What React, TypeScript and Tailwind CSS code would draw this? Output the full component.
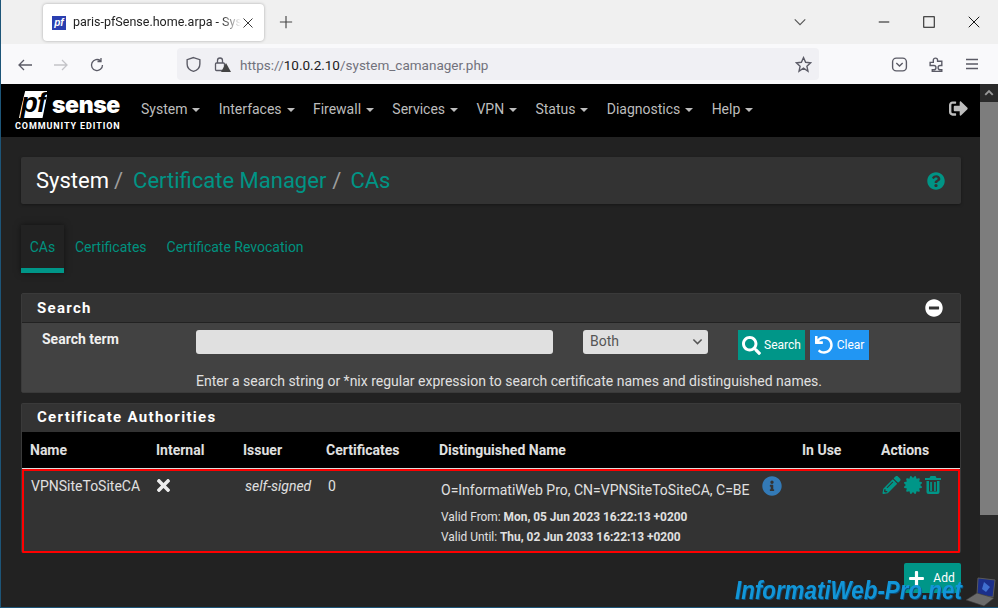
import React from "react";
import { FaSearch, FaUndo, FaPlus, FaTimes, FaInfoCircle, FaMinusCircle, FaQuestionCircle, FaCertificate, FaPencilAlt, FaSignOutAlt } from "react-icons/fa";

const nav = ["System", "Interfaces", "Firewall", "Services", "VPN", "Status", "Diagnostics", "Help"];

function Ico({ d, className = "" }: { d: React.ReactNode; className?: string }) {
  return (
    <svg viewBox="0 0 16 16" fill="none" stroke="currentColor" strokeWidth="1.3" className={className}>
      {d}
    </svg>
  );
}

function Logo() {
  return (
    <div className="self-start flex flex-col items-start w-[108px] ml-[14px] mr-[18px] pt-[7px]">
      <div className="flex items-start h-[27px] ml-[4px]">
        <div className="h-[27px] w-[28px] bg-white flex items-center justify-center overflow-hidden [clip-path:polygon(22%_0,100%_0,100%_18%,84%_100%,0_100%,8%_60%)]">
          <span className="text-black font-bold italic text-[28px] tracking-[-1px] leading-none font-['Liberation_Sans',sans-serif] mt-[-4px]">pf</span>
        </div>
        <span className="text-white font-black text-[23px] leading-[23px] tracking-[-0.4px] font-['Inter',sans-serif] ml-[5px] mt-[3px]">sense</span>
      </div>
      <span className="text-white font-bold text-[9px] tracking-[0.9px] leading-[11px] mt-[3px] whitespace-nowrap">COMMUNITY EDITION</span>
    </div>
  );
}

function Laptop() {
  return (
    <svg viewBox="0 0 60 40" className="absolute left-[937px] top-[568px] w-[60px] h-[40px]">
      <path d="M40 10l17 2-2 17-16-2z" fill="#1b2f8a" stroke="#5a5a5a" strokeWidth="1" />
      <path d="M46 14l6 5-4 5-4-3z" fill="#3f6fd0" />
      <path d="M28 32l11-7 17 5-10 8z" fill="#6b6b6b" stroke="#3a3a3a" strokeWidth="0.6" />
    </svg>
  );
}

export default function App() {
  return (
    <div className="h-[608px] w-[998px] overflow-hidden flex flex-col font-['Roboto',sans-serif] bg-[#222] border-l border-b border-[#1d5578] relative">
      {/* browser tab strip */}
      <div className="h-[44px] shrink-0 bg-[#f0f0f0] flex items-center font-['Noto_Sans',sans-serif]">
        <div className="ml-[42px] mt-[1px] w-[221px] h-[37px] bg-white rounded-[4px] shadow-[0_0_3px_rgba(0,0,0,0.3)] flex items-center pl-[9px]">
          <span className="w-[14px] h-[14px] bg-[#2a3fb0] text-white text-[10px] font-bold italic leading-[14px] text-center font-['Liberation_Sans',sans-serif]">pf</span>
          <span className="ml-[7px] w-[168px] text-[12.5px] text-[#222] whitespace-nowrap overflow-hidden font-['Roboto',sans-serif] [mask-image:linear-gradient(to_right,black_88%,transparent)]">paris-pfSense.home.arpa - System: Cert</span>
          <Ico className="w-[12px] h-[12px] text-[#333] ml-[1px]" d={<path d="M2 2l12 12M14 2L2 14" />} />
        </div>
        <Ico className="w-[14px] h-[14px] text-[#444] ml-[15px]" d={<path d="M8 1v14M1 8h14" />} />
        <div className="flex-1" />
        <Ico className="w-[14px] h-[14px] text-[#555] mr-[71px]" d={<path d="M2 5l6 6 6-6" />} />
        <Ico className="w-[12px] h-[12px] text-[#111] mr-[33px]" d={<path d="M1 8h14" />} />
        <Ico className="w-[12px] h-[12px] text-[#111] mr-[33px]" d={<rect x="1" y="1" width="14" height="14" />} />
        <Ico className="w-[12px] h-[12px] text-[#111] mr-[18px]" d={<path d="M1 1l14 14M15 1L1 15" />} />
      </div>
      {/* browser toolbar */}
      <div className="h-[40px] shrink-0 bg-[#f9f9fb] flex items-center">
        <Ico className="w-[16px] h-[16px] text-[#5b5b66] ml-[16px] mt-[2px]" d={<path d="M15 8H2M7 3L2 8l5 5" />} />
        <Ico className="w-[16px] h-[16px] text-[#c4c4c8] ml-[20px] mt-[2px]" d={<path d="M1 8h13M9 3l5 5-5 5" />} />
        <Ico className="w-[16px] h-[16px] text-[#5b5b66] ml-[20px] mt-[2px]" d={<path d="M13.5 8A5.5 5.5 0 1 1 11.5 3.8M12 1v3.5H8.5" />} />
        <div className="ml-[72px] w-[642px] h-[32px] bg-[#f0f0f4] rounded-[4px] flex items-center pl-[8px]">
          <Ico className="w-[17px] h-[17px] text-[#5b5b66]" d={<path d="M8 1.5l6 2v4c0 3.5-2.500 6-6 7-3.500-1-6-3.500-6-7v-4z" />} />
          <div className="relative ml-[11px] w-[16px] h-[16px]">
            <Ico className="w-[16px] h-[16px] text-[#5b5b66]" d={<><rect x="2.5" y="7" width="9" height="7.5" rx="1" /><path d="M4.5 7V4.500a2.500 2.500 0 0 1 5 0V7" /></>} />
            <span className="absolute right-[-2px] bottom-0 w-0 h-0 border-l-[5px] border-r-[5px] border-b-[9px] border-transparent border-b-[#444]" />
          </div>
          <span className="ml-[11px] mt-[3px] text-[13.5px] text-[#72727c] whitespace-nowrap">https://<span className="text-[#1c1b22] font-normal">10.0.2.10</span>/system_camanager.php</span>
          <div className="flex-1" />
          <Ico className="w-[17px] h-[17px] text-[#5b5b66] mr-[7px]" d={<path d="M8 1.500l2 4.400 4.700.5-3.500 3.200 1 4.700L8 11.400l-4.200 2.900 1-4.700L1.300 6.400 6 5.900z" />} />
        </div>
        <Ico className="w-[17px] h-[17px] text-[#5b5b66] ml-[72px]" d={<><rect x="1.500" y="2" width="13" height="12" rx="3.500" /><path d="M5 6.500l3 3 3-3" /></>} />
        <Ico className="w-[17px] h-[17px] text-[#5b5b66] ml-[20px]" d={<path d="M2 6h3V4a2 2 0 0 1 4 0v1h4v4h-1.500a2 2 0 0 0 0 4H13v1.500H4V13h1.500a2 2 0 0 0 0-4H2z" />} />
        <Ico className="w-[16px] h-[16px] text-[#5b5b66] ml-[19px]" d={<path d="M2 3.500h12M2 8h12M2 12.500h12" />} />
      </div>
      {/* page */}
      <div className="flex-1 flex min-h-0">
        <div className="flex-1 min-w-0 relative">
          <div className="h-[53px] bg-black flex items-center">
            <Logo />
            <nav className="flex items-center gap-[18.3px] text-[14px] text-[#bdbdbd] -mt-[2px]">
              {nav.map((n) => (
                <span key={n} className="flex items-center gap-[5px]">
                  {n}
                  <span className="w-0 h-0 border-l-[4px] border-r-[4px] border-t-[4px] border-transparent border-t-[#bdbdbd]" />
                </span>
              ))}
            </nav>
            <div className="flex-1" />
            <FaSignOutAlt className="text-[#bdbdbd] w-[19px] h-[19px] mr-[12px] mb-[4px]" />
          </div>
          <div className="pl-[20px] pr-[19px] pt-[20px]">
            <div className="h-[47px] bg-[#333] flex items-center pl-[15px] pr-[16px] rounded-[2px] shadow-[0_1px_3px_rgba(0,0,0,0.35)] text-[22px]">
              <div className="flex items-center">
                <span className="text-white">System</span>
                <span className="text-[#9e9e9e] ml-[5px]">/</span>
                <span className="text-[#009485] ml-[10px]">Certificate Manager</span>
                <span className="text-[#9e9e9e] ml-[6px]">/</span>
                <span className="text-[#009485] ml-[9px]">CAs</span>
              </div>
              <div className="flex-1" />
              <FaQuestionCircle className="text-[#009485] w-[18px] h-[18px]" />
            </div>
            <div className="flex mt-[21px] h-[48px] text-[14px] text-[#00917f]">
              <span className="w-[43px] text-center leading-[44px] border-b-[5px] border-[#009688] shadow-[0_0_6px_rgba(0,0,0,0.5)]">CAs</span>
              <span className="ml-[11px] leading-[44px]">Certificates</span>
              <span className="ml-[20px] leading-[44px]">Certificate Revocation</span>
            </div>
            <section className="mt-[20px] border border-[#3a3a3a] rounded-[2px]">
              <h2 className="h-[29px] bg-[#333] border-b border-[#222] flex items-center justify-between pl-[15px] pr-[17px] text-white font-bold text-[15px] tracking-[1.3px]">
                Search
                <FaMinusCircle className="w-[18px] h-[18px] text-white" />
              </h2>
              <div className="h-[69px] bg-[#424242] pl-[20px] pt-[7px] flex flex-col">
                <div className="flex items-start">
                  <label className="w-[154px] text-[14px] font-bold text-[#f0f0f0] leading-[18px]">Search term</label>
                  <div className="w-[357px] h-[24px] bg-[#e0e0e0] rounded-[3px]" />
                  <div className="ml-[30px] w-[125px] h-[24px] pb-[2px] bg-[#e0e0e0] rounded-[3px] flex items-center justify-between pl-[7px] pr-[5px] text-[14px] text-[#555]">
                    Both
                    <Ico className="w-[11px] h-[11px] text-[#555]" d={<path d="M2 5l6 6 6-6" strokeWidth="2.2" />} />
                  </div>
                  <button className="ml-[30px] h-[30px] w-[67px] bg-[#009688] text-white text-[12px] flex items-center justify-center gap-[3px]">
                    <FaSearch className="w-[19px] h-[19px]" /> <span>Search</span>
                  </button>
                  <button className="ml-[5px] h-[30px] w-[59px] bg-[#2196f3] text-white text-[12px] flex items-center justify-center gap-[4px]">
                    <FaUndo className="w-[18px] h-[18px]" /> <span>Clear</span>
                  </button>
                </div>
                <p className="ml-[154px] mt-[12px] text-[14px] leading-[18px] text-[#e0e0e0] whitespace-nowrap">Enter a search string or *nix regular expression to search certificate names and distinguished names.</p>
              </div>
            </section>
            <section className="mt-[10px] border border-[#3a3a3a] border-b-0 rounded-[2px]">
              <h2 className="h-[28px] pb-[1px] bg-[#333] flex items-center pl-[15px] text-white font-bold text-[15px] tracking-[1.3px]">Certificate Authorities</h2>
              <div className="h-[37px] bg-black border-b border-[#ddd] grid grid-cols-[126px_87px_83px_113px_363px_79px_1fr] items-center pl-[8px] text-[14px] font-bold text-[#e0e0e0]">
                <span>Name</span><span>Internal</span><span>Issuer</span><span>Certificates</span><span>Distinguished Name</span><span>In Use</span><span>Actions</span>
              </div>
              <div className="h-[84px] bg-[#333] border-2 border-[#f00] rounded-[1px] grid grid-cols-[126px_87px_83px_113px_363px_79px_1fr] items-start pl-[6px] pt-[5px] text-[14px] text-[#e0e0e0]">
                <span className="leading-[20px] pl-[1px]">VPNSiteToSiteCA</span>
                <span className="pt-0"><FaTimes className="w-[19px] h-[19px] text-[#eee] -ml-[2px]" /></span>
                <span className="italic leading-[20px] pl-[2px]">self-signed</span>
                <span className="leading-[20px] pl-[2px]">0</span>
                <div className="pl-[2px] relative">
                  <div className="leading-[20px] pt-[4px] whitespace-nowrap">O=InformatiWeb Pro, CN=VPNSiteToSiteCA, C=BE</div>
                  <div className="mt-[7px] text-[11.9px] leading-[20px] whitespace-nowrap">Valid From: <b>Mon, 05 Jun 2023 16:22:13 +0200</b></div>
                  <div className="text-[11.9px] leading-[20px] whitespace-nowrap">Valid Until: <b>Thu, 02 Jun 2033 16:22:13 +0200</b></div>
                  <FaInfoCircle className="absolute left-[323px] top-0 w-[20px] h-[20px] text-[#337ab7]" />
                </div>
                <span />
                <div className="flex items-center gap-[3px] text-[#009688] pl-[1px]">
                  <FaPencilAlt className="w-[19px] h-[18px]" />
                  <FaCertificate className="w-[18px] h-[18px]" />
                  <svg viewBox="0 0 16 18" className="w-[16px] h-[18px]" fill="currentColor">
                    <path d="M5.500 0h5l1 2H16v2H0V2h4.500z" />
                    <path d="M1.500 5H4v10.500h8V5h2.500v11a2 2 0 0 1-2 2h-9a2 2 0 0 1-2-2z" />
                    <rect x="5.200" y="6" width="1.700" height="9" />
                    <rect x="9.100" y="6" width="1.700" height="9" />
                  </svg>
                </div>
              </div>
            </section>
            <div className="flex justify-end mt-[10px]">
              <button className="w-[57px] h-[30px] bg-[#009688] rounded-[2px] text-white text-[12px] flex items-center justify-center gap-[8px] pr-[2px]">
                <FaPlus className="w-[17px] h-[17px]" /> <span>Add</span>
              </button>
            </div>
          </div>
        </div>
        {/* scrollbar */}
        <div className="w-[18px] shrink-0 bg-[#2a2a2a] flex flex-col">
          <div className="h-[18px] flex items-center justify-center">
            <Ico className="w-[10px] h-[10px] text-[#999]" d={<path d="M2 11l6-6 6 6" strokeWidth="3" />} />
          </div>
          <div className="h-[413px] bg-[#7d7d7d]" />
        </div>
      </div>
      <span className="absolute right-[36px] bottom-[2px] origin-right scale-x-[0.86] text-[26px] leading-[30px] italic font-bold text-[#1296d8] whitespace-nowrap font-['Liberation_Sans',sans-serif] [text-shadow:1px_1px_0_#0c4f7a] pointer-events-none">InformatiWeb-Pro.net</span>
      <Laptop />
    </div>
  );
}
